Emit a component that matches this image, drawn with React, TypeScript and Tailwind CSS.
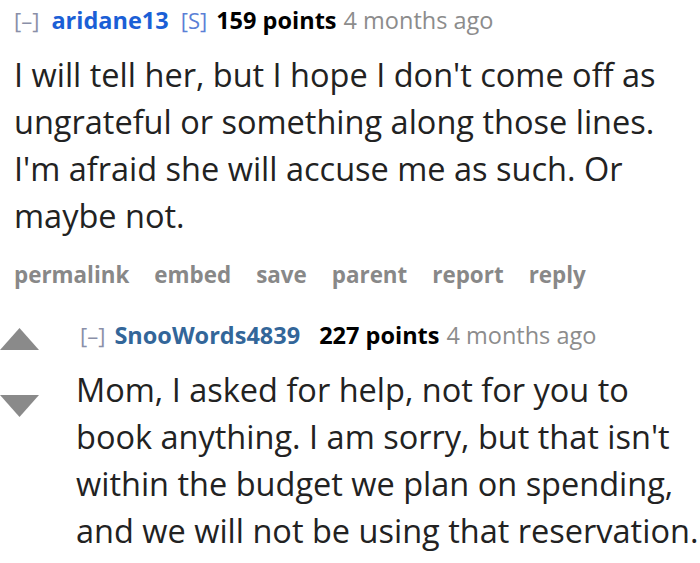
const FONT = "font-['Open_Sans','Noto_Sans',sans-serif]";

function Arrow({ down }: { down?: boolean }) {
  return (
    <svg width="39" height="22" viewBox="0 0 39 22" className="block">
      <polygon
        points={down ? "0,0 39,0 19.5,22" : "19.5,0 39,22 0,22"}
        fill="#8a8a8a"
      />
    </svg>
  );
}

function Header({
  user,
  userClass,
  points,
  submitter,
}: {
  user: string;
  userClass: string;
  points: string;
  submitter?: boolean;
}) {
  return (
    <div className="flex items-baseline whitespace-nowrap text-[23.5px] leading-[28px]">
      <span className="text-[22px] text-[#8a8fa8]">[–]</span>
      <span className={`font-bold ${userClass} ${submitter ? "ml-3" : "ml-[9px]"}`}>
        {user}
      </span>
      {submitter ? (
        <span className="ml-3 text-[22px] text-[#5b7fd6]">[S]</span>
      ) : null}
      <span className={`font-bold text-black ${submitter ? "ml-[9px]" : "ml-[19px]"}`}>
        {points}
      </span>
      <span className="ml-[7px] text-[#8c8c8c]">4 months ago</span>
    </div>
  );
}

function Lines({ lines, className }: { lines: string[]; className: string }) {
  return (
    <p className={`whitespace-nowrap text-[32.5px] leading-[47px] text-[#222] ${className}`}>
      {lines.map((l) => (
        <span key={l} className="block">
          {l}
        </span>
      ))}
    </p>
  );
}

export default function App() {
  const actions = ["permalink", "embed", "save", "parent", "report", "reply"];

  return (
    <div className={`h-[563px] w-[700px] overflow-hidden bg-white ${FONT}`}>
      <div className="pl-[14px] pt-[6px]">
        <Header
          user="aridane13"
          userClass="text-[#1b5fd6]"
          points="159 points"
          submitter
        />
        <Lines
          className="mt-[17px]"
          lines={[
            "I will tell her, but I hope I don't come off as",
            "ungrateful or something along those lines.",
            "I'm afraid she will accuse me as such. Or",
            "maybe not.",
          ]}
        />
        <div className="mt-[22px] flex gap-[25px] text-[22.4px] font-bold leading-[28px] text-[#888]">
          {actions.map((a) => (
            <span key={a}>{a}</span>
          ))}
        </div>
      </div>

      <div className="mt-[32px] flex">
        <div className="flex w-[76px] flex-col gap-[45px] pt-[7px]">
          <Arrow />
          <Arrow down />
        </div>
        <div className="flex-1">
          <div className="pl-[4px]">
            <Header
              user="SnooWords4839"
              userClass="text-[#336699]"
              points="227 points"
            />
          </div>
          <Lines
            className="mt-[17px]"
            lines={[
              "Mom, I asked for help, not for you to",
              "book anything. I am sorry, but that isn't",
              "within the budget we plan on spending,",
              "and we will not be using that reservation.",
            ]}
          />
        </div>
      </div>
    </div>
  );
}
